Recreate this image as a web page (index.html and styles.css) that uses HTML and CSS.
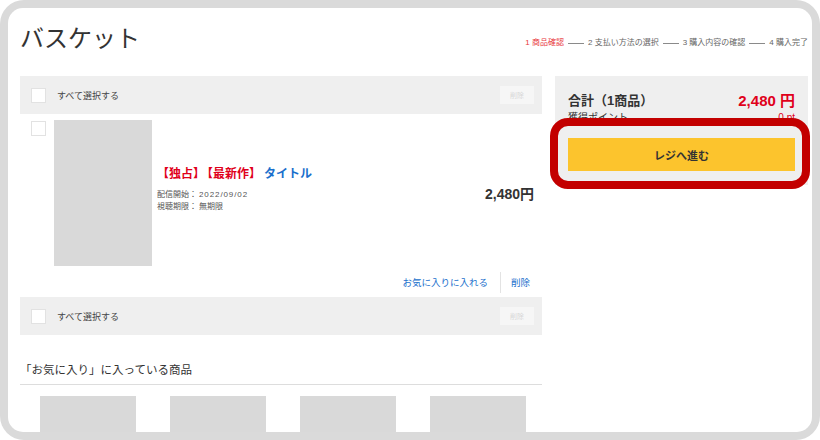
FILE: index.html
```html
<!DOCTYPE html>
<html lang="ja">
<head>
<meta charset="utf-8">
<title>バスケット</title>
<link rel="stylesheet" href="styles.css">
</head>
<body>
<div class="frame">
  <div class="screen">
    <header class="head">
      <h1 class="title">バスケット</h1>
      <ol class="steps">
        <li class="step step-current">1 商品確認</li>
        <li class="step-line"></li>
        <li class="step">2 支払い方法の選択</li>
        <li class="step-line"></li>
        <li class="step">3 購入内容の確認</li>
        <li class="step-line"></li>
        <li class="step">4 購入完了</li>
      </ol>
    </header>
    <div class="cols">
      <section class="cart">
        <div class="selbar">
          <span class="check"></span>
          <span class="selbar-label">すべて選択する</span>
          <span class="btn-disabled">削除</span>
        </div>
        <div class="item">
          <span class="check check-item"></span>
          <div class="thumb"></div>
          <div class="info">
            <p class="item-title"><span class="tag">【独占】</span><span class="tag tag-gap">【最新作】</span><span class="name">タイトル</span></p>
            <dl class="meta">
              <div class="meta-row"><dt>配信開始：</dt><dd class="num">2022/09/02</dd></div>
              <div class="meta-row"><dt>視聴期限：</dt><dd>無期限</dd></div>
            </dl>
          </div>
          <div class="price">2,480円</div>
        </div>
        <div class="actions">
          <a class="action">お気に入りに入れる</a>
          <a class="action action-sep">削除</a>
        </div>
        <div class="selbar">
          <span class="check"></span>
          <span class="selbar-label">すべて選択する</span>
          <span class="btn-disabled">削除</span>
        </div>
        <h2 class="fav-title">「お気に入り」に入っている商品</h2>
        <div class="fav-grid">
          <div class="fav-thumb"></div>
          <div class="fav-thumb"></div>
          <div class="fav-thumb"></div>
          <div class="fav-thumb"></div>
        </div>
      </section>
      <aside class="side">
        <div class="summary">
          <div class="sum-row">
            <span class="sum-label">合計（1商品）</span>
            <span class="sum-price">2,480 円</span>
          </div>
          <div class="pt-row">
            <span>獲得ポイント</span>
            <span class="pt-val">0 pt</span>
          </div>
          <button class="checkout">レジへ進む</button>
        </div>
        <div class="highlight"></div>
      </aside>
    </div>
  </div>
</div>
</body>
</html>
```
FILE: styles.css
```css
* { box-sizing: border-box; margin: 0; padding: 0; }

html, body { background: #ffffff; }

body {
  font-family: "Liberation Sans", "Noto Sans CJK JP", sans-serif;
  color: #333333;
}

.frame {
  width: 820px;
  height: 440px;
  background: #dadada;
  border-radius: 24px;
  padding: 8px;
}

.screen {
  height: 424px;
  background: #ffffff;
  border-radius: 15px;
  overflow: hidden;
  padding: 0 4px 0 12px;
}

.head {
  display: flex;
  justify-content: space-between;
  align-items: flex-end;
  padding-top: 19px;
}

.title {
  font-size: 24px;
  line-height: 24px;
  font-weight: 400;
  color: #333333;
}

.steps {
  list-style: none;
  display: flex;
  align-items: center;
  font-size: 8px;
  line-height: 10px;
  color: #666666;
  margin-bottom: 3px;
  white-space: nowrap;
}

.step-current { color: #e8383d; }

.step-line {
  width: 16px;
  height: 1px;
  background: #8a8a8a;
  margin: 0 4px;
}

.cols {
  display: flex;
  gap: 13px;
  margin-top: 25px;
}

.cart { width: 522px; flex: none; }

.selbar {
  height: 38px;
  background: #efefef;
  display: flex;
  align-items: center;
  padding: 0 8px 0 11px;
}

.check {
  width: 15px;
  height: 15px;
  background: #ffffff;
  border: 1px solid #e2e2e2;
  flex: none;
}

.selbar-label {
  font-size: 9px;
  margin-left: 11px;
  color: #444444;
  flex: 1;
}

.btn-disabled {
  width: 34px;
  height: 18px;
  background: #f6f6f6;
  color: #d6d6d6;
  font-size: 7px;
  display: flex;
  align-items: center;
  justify-content: center;
}

.item {
  display: flex;
  padding: 6px 8px 0 11px;
}

.check-item { margin-top: 1px; }

.thumb {
  width: 98px;
  height: 146px;
  background: #d9d9d9;
  margin-left: 8px;
  flex: none;
}

.info {
  flex: 1;
  align-self: center;
  padding: 0 0 7px 5px;
}

.item-title {
  font-size: 12px;
  line-height: 16px;
  font-weight: 700;
  margin-bottom: 7px;
}

.tag { color: #e0001b; }
.tag-gap { margin-left: 2px; margin-right: 3px; }
.name { color: #1a6fcc; }

.meta {
  font-size: 8px;
  line-height: 12px;
  color: #555555;
}

.meta-row { display: flex; }
.meta-row dt { margin-right: 2px; white-space: nowrap; }
.num { letter-spacing: 0.9px; }

.price {
  align-self: center;
  font-size: 14px;
  font-weight: 700;
  color: #333333;
}

.actions {
  display: flex;
  justify-content: flex-end;
  align-items: center;
  height: 21px;
  margin: 6px 0 4px;
}

.action {
  font-size: 9.5px;
  line-height: 21px;
  color: #1a6fcc;
  padding: 0 12px 0 0;
}

.action-sep {
  border-left: 1px solid #e3e3e3;
  padding-left: 10px;
}

.fav-title {
  font-size: 11.5px;
  line-height: 16px;
  font-weight: 400;
  color: #333333;
  margin-top: 27px;
  padding: 0 0 6px 0;
  border-bottom: 1px solid #dddddd;
}

.fav-grid {
  display: grid;
  grid-template-columns: repeat(4, 130px);
  justify-items: center;
  padding-left: 3px;
  margin-top: 11px;
}

.fav-thumb {
  width: 96px;
  height: 60px;
  background: #d9d9d9;
}

.side {
  width: 253px;
  flex: none;
  position: relative;
}

.summary {
  background: #efefef;
  padding: 13px 13px 14px;
}

.sum-row {
  display: flex;
  justify-content: space-between;
  align-items: center;
  height: 20px;
}

.sum-label { font-size: 13px; font-weight: 700; }

.sum-price {
  font-size: 15px;
  font-weight: 700;
  color: #e0001b;
}

.pt-row {
  display: flex;
  justify-content: space-between;
  font-size: 10px;
  line-height: 13px;
  margin-top: 2px;
}

.pt-val { color: #e0001b; }

.checkout {
  display: block;
  width: 100%;
  height: 33px;
  margin-top: 14px;
  border: none;
  background: #fcc42d;
  font-family: "Liberation Sans", "Noto Sans CJK JP", sans-serif;
  font-size: 11px;
  font-weight: 700;
  color: #333333;
}

.highlight {
  position: absolute;
  left: -5px;
  top: 42px;
  width: 260px;
  height: 71px;
  border: 8px solid #c30000;
  border-radius: 18px;
}
```
